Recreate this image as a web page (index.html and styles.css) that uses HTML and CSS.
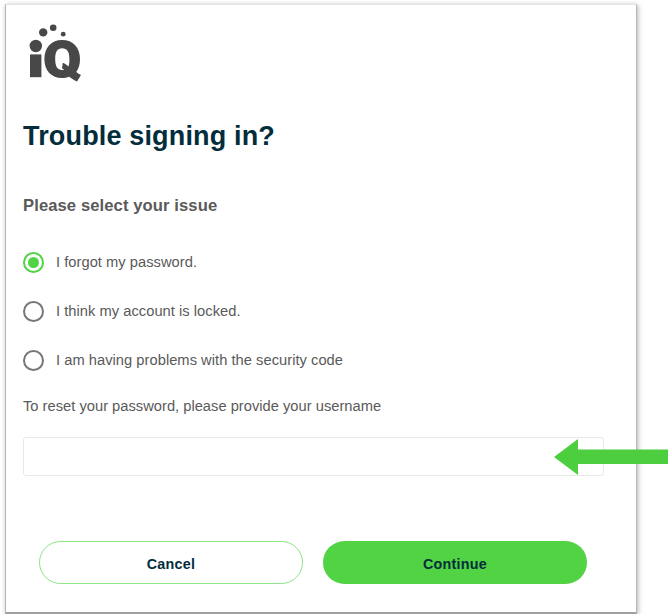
FILE: index.html
```html
<!DOCTYPE html>
<html lang="en">
<head>
    <meta charset="UTF-8">
    <meta name="viewport" content="width=device-width, initial-scale=1.0">
    <title>Trouble signing in?</title>
    <link rel="stylesheet" href="styles.css">
</head>
<body>
    <main class="card">
        <svg class="logo" viewBox="0 0 54 60" role="img" aria-label="iQ">
            <circle cx="7.8" cy="23" r="6.2"/>
            <circle cx="15.2" cy="9.4" r="4.2"/>
            <circle cx="25.2" cy="4.8" r="3.3"/>
            <circle cx="35.2" cy="11.2" r="2.4"/>
            <rect x="2" y="31.4" width="11.4" height="22.8"/>
            <path fill-rule="evenodd" d="M34 17C23.500 17 16.400 24.500 16.400 36C16.400 47.800 23.500 55 34 55C36.600 55 39 54.500 41.200 53.700C43.500 55.600 46 57 49 58.500L53 52C51.200 51.400 49.700 50.300 48.200 49.100C50.800 45.700 52 41.300 52 36C52 24.500 45.200 17 34 17ZM34.200 25.300C39.200 25.300 41.400 29 41.400 36C41.400 39.200 41.200 41.600 40.400 43.400C39 42 37.200 40.700 34.800 39.700L34 45.600C35 46 35.500 46.200 36 46.700C35.300 46.900 34.800 47 34.100 47C29.300 47 27.200 43.300 27.200 36C27.200 29 29.300 25.300 34.200 25.300Z"/>
        </svg>

        <h1>Trouble signing in?</h1>

        <form class="issue-form">
            <h2>Please select your issue</h2>
            <div class="options">
                <label class="option">
                    <input type="radio" name="issue" checked>
                    <span>I forgot my password.</span>
                </label>
                <label class="option">
                    <input type="radio" name="issue">
                    <span>I think my account is locked.</span>
                </label>
                <label class="option">
                    <input type="radio" name="issue">
                    <span>I am having problems with the security code</span>
                </label>
            </div>

            <div class="username">
                <label for="username">To reset your password, please provide your username</label>
                <input type="text" id="username">
                <svg class="arrow" viewBox="0 0 114 36" aria-hidden="true">
                    <path d="M0 18L24 0V10.500H114V25H24V36Z"/>
                </svg>
            </div>

            <div class="buttons">
                <button type="button" class="cancel">Cancel</button>
                <button type="submit" class="continue">Continue</button>
            </div>
        </form>
    </main>
</body>
</html>
```
FILE: styles.css
```css
:root {
    --green: #51d344;
    --dark: #032d3b;
    --text-color: #5a5a5a;
}

* {
    box-sizing: border-box;
    margin: 0;
    padding: 0;
}

body {
    font-family: "Liberation Sans", Arial, sans-serif;
    font-size: 14.7px;
    color: var(--text-color);
    background-color: #fff;
    overflow: hidden;
}

.card {
    width: 632px;
    height: 610px;
    margin: 4px 0 0 5px;
    padding: 18px 31px 0 17px;
    background: #fff;
    border: 1px solid #b5b5b5;
    border-top-color: #e4e4e4;
    border-bottom: 2px solid #a0a0a0;
    box-shadow: 1px 1px 5px rgba(0,0,0,0.3);
}

.logo {
    display: block;
    width: 54px;
    height: 60px;
    margin-left: 5px;
    fill: #484848;
}

h1 {
    margin-top: 38px;
    font-size: 27px;
    line-height: 30px;
    letter-spacing: 0.16px;
    color: var(--dark);
}

h2 {
    margin-top: 45px;
    font-size: 16.6px;
    line-height: 20px;
    letter-spacing: 0.1px;
}

.options {
    display: flex;
    flex-direction: column;
    gap: 27px;
    margin-top: 35px;
}

.option {
    display: flex;
    align-items: center;
    gap: 12px;
    height: 22px;
    letter-spacing: 0.03px;
}

.option input {
    appearance: none;
    display: grid;
    place-items: center;
    width: 21px;
    height: 21px;
    border: 2px solid #777;
    border-radius: 50%;
}

.option input:checked {
    border-color: var(--green);
}

.option input:checked::before {
    content: "";
    width: 11px;
    height: 11px;
    border-radius: 50%;
    background: var(--green);
}

.username {
    position: relative;
    margin-top: 26px;
}

.username label {
    display: block;
    line-height: 18px;
    letter-spacing: 0.01px;
}

.username input {
    display: block;
    width: 581px;
    height: 39px;
    margin-top: 22px;
    padding: 0 10px;
    font: inherit;
    border: 1px solid #e9e9e9;
    border-radius: 3px;
    outline: none;
}

.arrow {
    position: absolute;
    left: 531px;
    top: 42px;
    width: 114px;
    height: 36px;
    fill: #4dce3f;
}

.buttons {
    display: flex;
    gap: 20px;
    margin: 65px 0 0 16px;
}

button {
    width: 264px;
    height: 43px;
    padding-top: 2px;
    font: bold 14.3px "Liberation Sans", Arial, sans-serif;
    letter-spacing: 0.25px;
    color: var(--dark);
    border-radius: 22px;
    cursor: pointer;
}

.cancel {
    background: #fff;
    border: 1px solid #8ee386;
}

.continue {
    background: var(--green);
    border: none;
}
```
